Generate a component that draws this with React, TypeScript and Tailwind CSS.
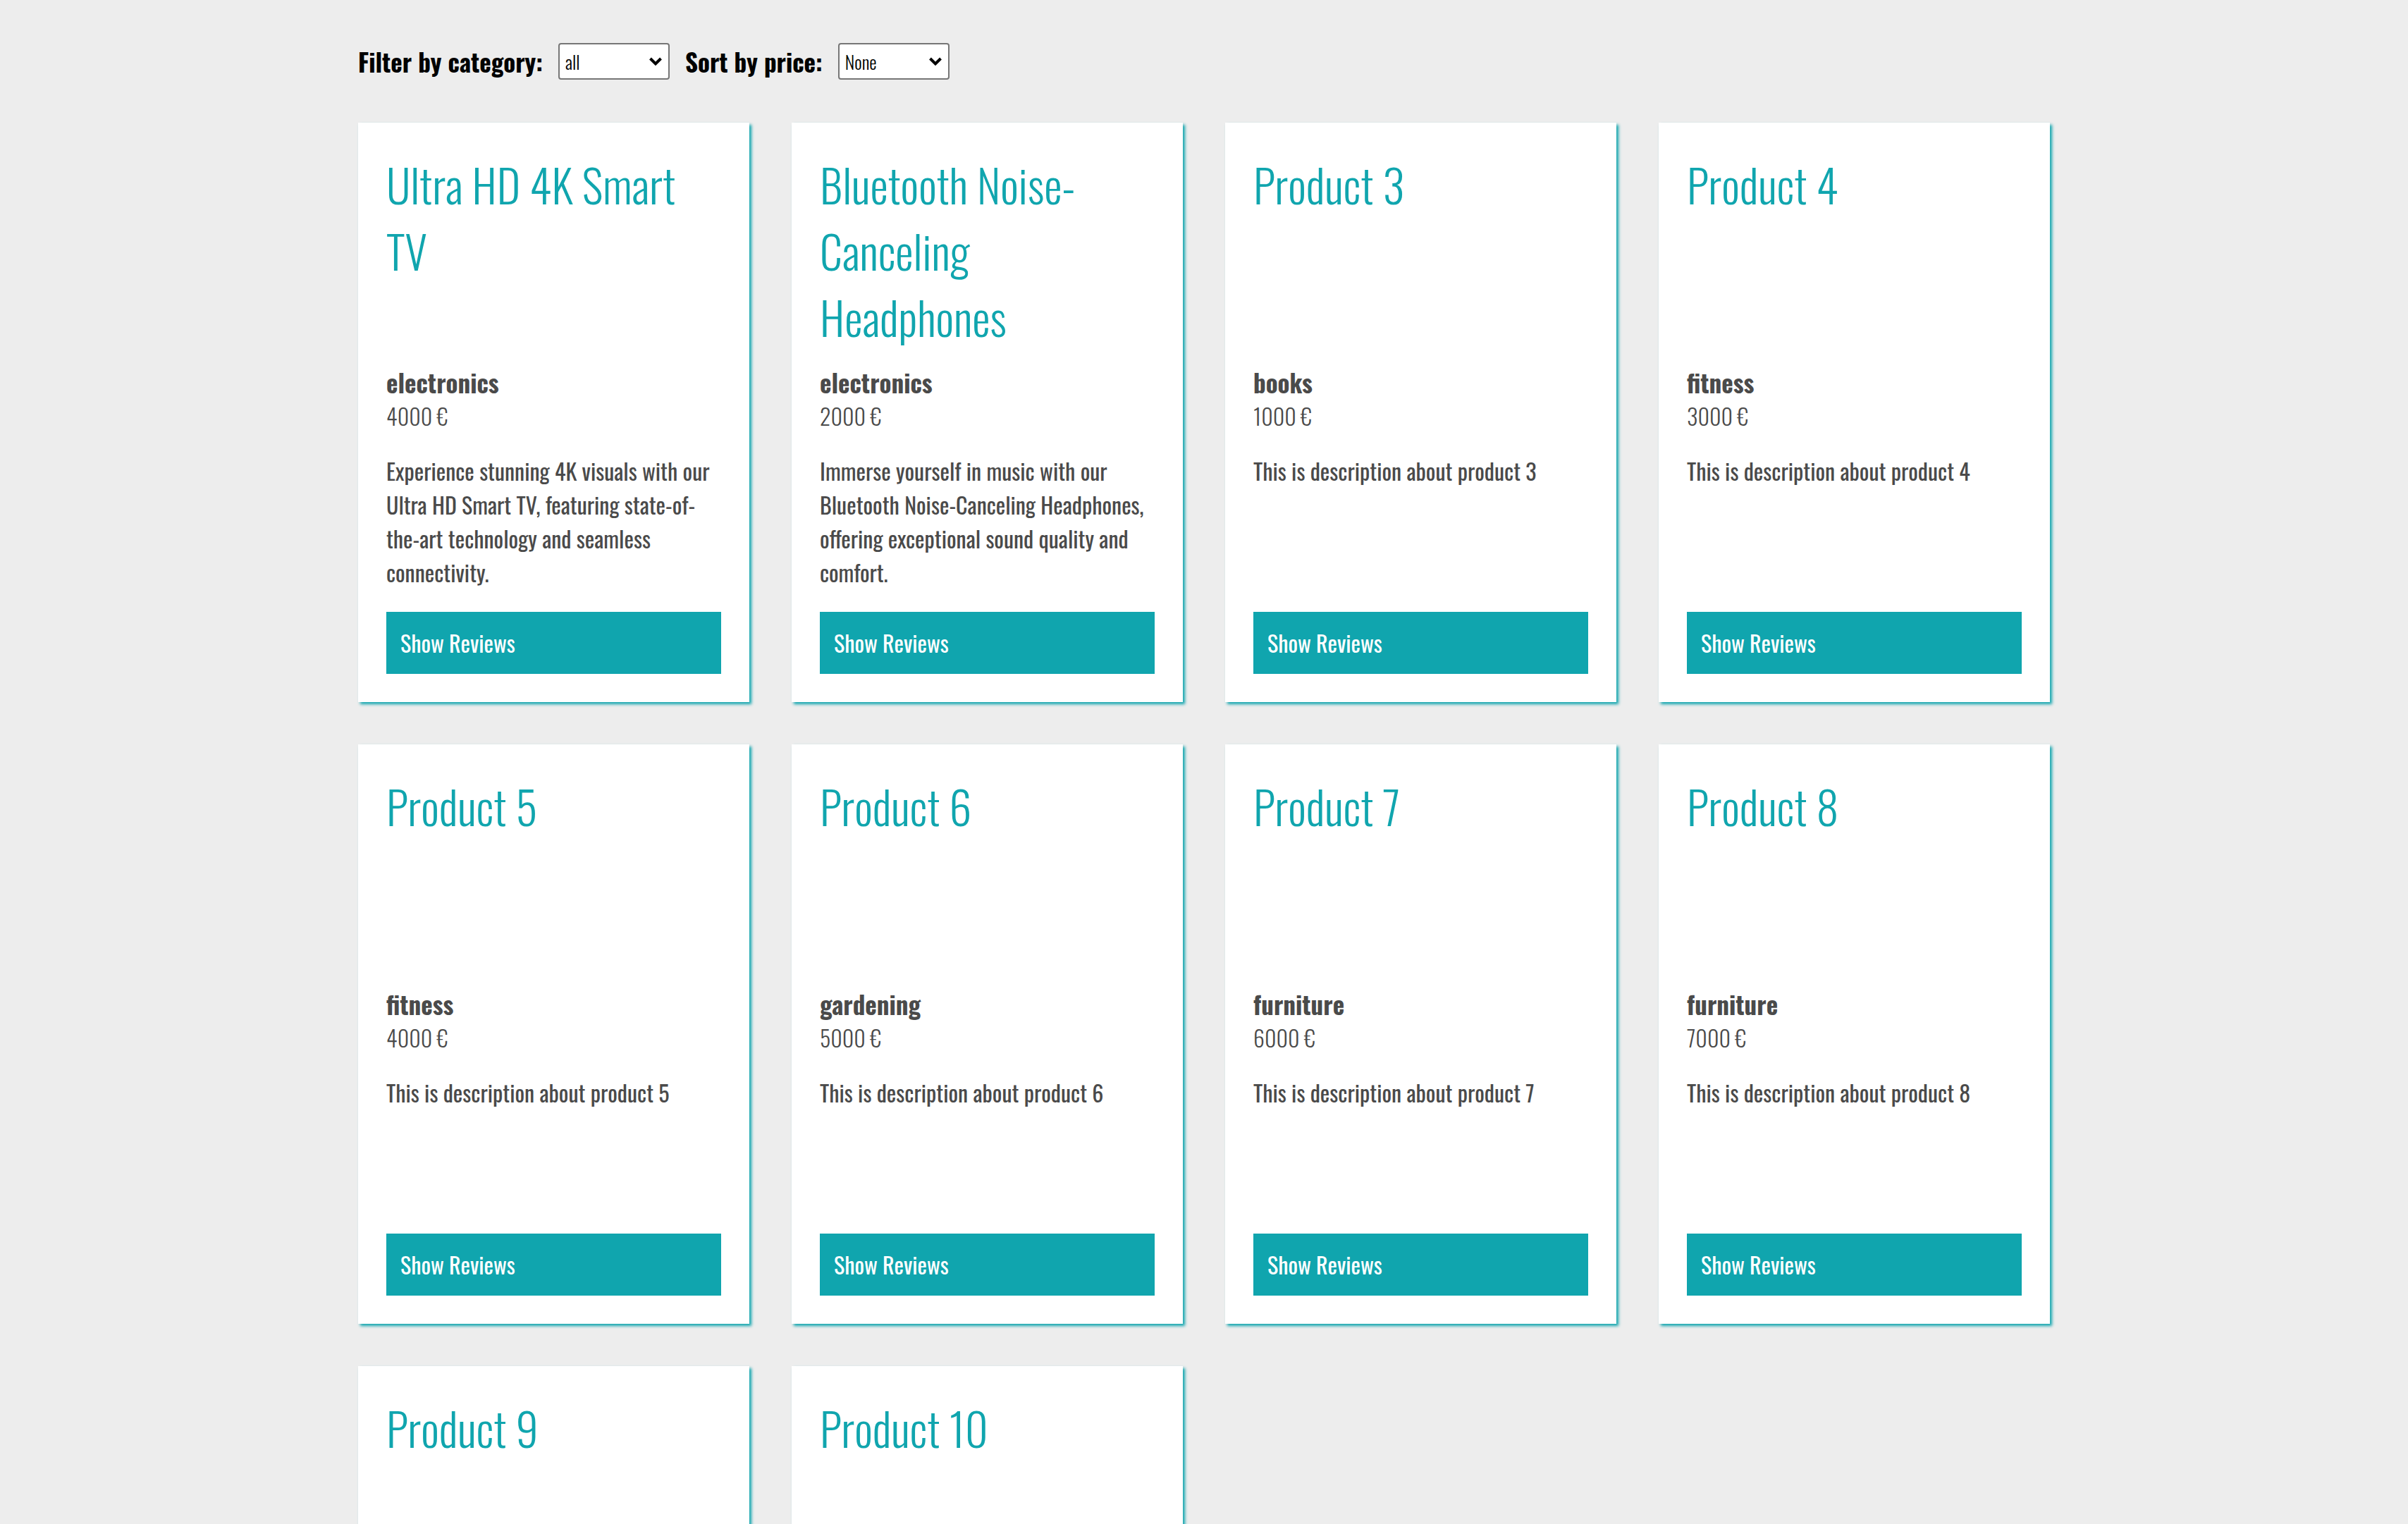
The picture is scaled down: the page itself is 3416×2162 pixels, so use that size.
import { useState } from 'react';

interface Product {
  id: number;
  title: string;
  category: string;
  price: number;
  description: string;
}

const products: Product[] = [
  {
    id: 1,
    title: 'Ultra HD 4K Smart TV',
    category: 'electronics',
    price: 4000,
    description:
      'Experience stunning 4K visuals with our Ultra HD Smart TV, featuring state-of-the-art technology and seamless connectivity.',
  },
  {
    id: 2,
    title: 'Bluetooth Noise-Canceling Headphones',
    category: 'electronics',
    price: 2000,
    description:
      'Immerse yourself in music with our Bluetooth Noise-Canceling Headphones, offering exceptional sound quality and comfort.',
  },
  { id: 3, title: 'Product 3', category: 'books', price: 1000, description: 'This is description about product 3' },
  { id: 4, title: 'Product 4', category: 'fitness', price: 3000, description: 'This is description about product 4' },
  { id: 5, title: 'Product 5', category: 'fitness', price: 4000, description: 'This is description about product 5' },
  { id: 6, title: 'Product 6', category: 'gardening', price: 5000, description: 'This is description about product 6' },
  { id: 7, title: 'Product 7', category: 'furniture', price: 6000, description: 'This is description about product 7' },
  { id: 8, title: 'Product 8', category: 'furniture', price: 7000, description: 'This is description about product 8' },
  { id: 9, title: 'Product 9', category: 'books', price: 8000, description: 'This is description about product 9' },
  { id: 10, title: 'Product 10', category: 'gardening', price: 9000, description: 'This is description about product 10' },
];

function Chevron() {
  return (
    <svg
      className="pointer-events-none absolute right-[10px] top-1/2 -translate-y-1/2"
      width="20"
      height="14"
      viewBox="0 0 20 14"
      fill="none"
    >
      <path d="M2.5 3 L10 10.5 L17.5 3" stroke="#000" strokeWidth="4" />
    </svg>
  );
}

function Select({ value, options, onChange }: { value: string; options: string[]; onChange: (v: string) => void }) {
  return (
    <div className="relative h-[52px] w-[158px]">
      <select
        value={value}
        onChange={(e) => onChange(e.target.value)}
        className="h-full w-full appearance-none rounded-[4px] border-2 border-[#767676] bg-white pl-[8px] text-[26px] font-light text-black outline-none"
      >
        {options.map((o) => (
          <option key={o} value={o}>
            {o}
          </option>
        ))}
      </select>
      <Chevron />
    </div>
  );
}

function ProductCard({ product }: { product: Product }) {
  return (
    <div className="flex flex-col bg-white p-[40px] shadow-[3px_3px_4px_#10a5ae]">
      <div className="h-[304px]">
        <h2 className="text-[64px] font-light leading-[94px] text-[#10a5ae]">{product.title}</h2>
      </div>
      <div className="text-[35px] font-bold leading-[48px] text-[#4a4a4a]">{product.category}</div>
      <div className="text-[32px] font-light leading-[48px] text-[#4a4a4a]">{product.price} €</div>
      <p className="mt-[30px] h-[192px] text-[32px] font-normal leading-[48px] text-[#4a4a4a]">
        {product.description}
      </p>
      <button className="mt-[32px] h-[88px] bg-[#10a5ae] pl-[20px] text-left text-[32px] font-normal leading-[48px] text-white">
        Show Reviews
      </button>
    </div>
  );
}

export default function App() {
  const [category, setCategory] = useState('all');
  const [sort, setSort] = useState('None');

  const filtered = products.filter((p) => category === 'all' || p.category === category);
  const sorted = [...filtered].sort((a, b) => {
    if (sort === 'Ascending') return a.price - b.price;
    if (sort === 'Descending') return b.price - a.price;
    return 0;
  });

  return (
    <div className="min-h-screen bg-[#ededed] font-['Oswald','Open_Sans',sans-serif]">
      <div className="mx-auto w-[2400px] pt-[61px] pb-[60px]">
        <div className="flex h-[52px] items-center gap-[22px]">
          <label className="text-[35px] font-bold text-black">Filter by category:</label>
          <Select
            value={category}
            options={['all', 'electronics', 'books', 'fitness', 'gardening', 'furniture']}
            onChange={setCategory}
          />
          <label className="text-[35px] font-bold text-black">Sort by price:</label>
          <Select value={sort} options={['None', 'Ascending', 'Descending']} onChange={setSort} />
        </div>

        <div className="mt-[61px] grid grid-cols-4 gap-[60px]">
          {sorted.map((p) => (
            <ProductCard key={p.id} product={p} />
          ))}
        </div>
      </div>
    </div>
  );
}
